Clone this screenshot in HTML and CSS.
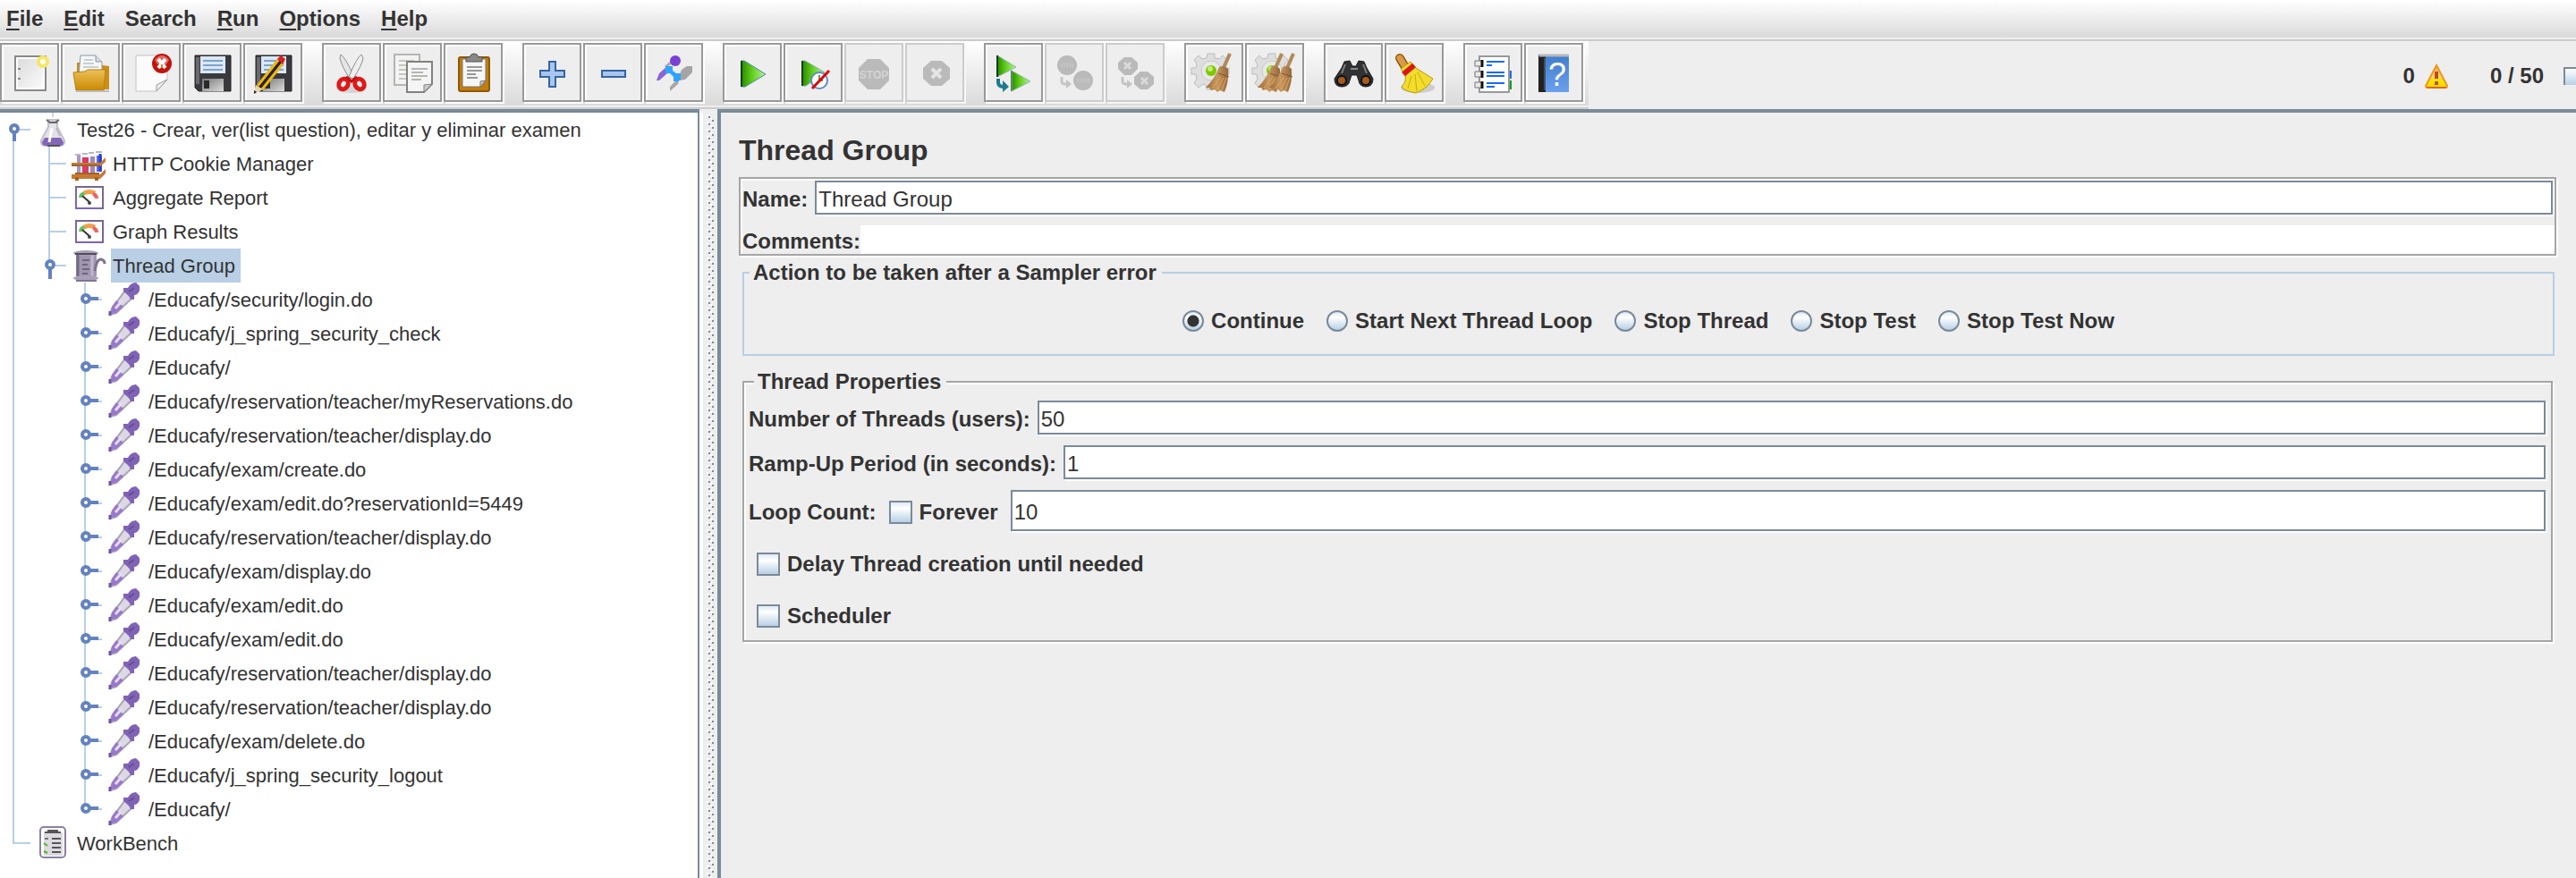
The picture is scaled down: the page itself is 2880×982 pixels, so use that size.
FILE: index.html
```html
<!DOCTYPE html>
<html lang="en">
<head>
<meta charset="utf-8">
<title>Thread Group</title>
<link rel="stylesheet" href="styles.css">
</head>
<body>
<svg class="defs" aria-hidden="true">
  <defs>
    <linearGradient id="gPage" x1="0" y1="0" x2="1" y2="1"><stop offset="0" stop-color="#dcdcdc"/><stop offset="1" stop-color="#fafafa"/></linearGradient>
    <linearGradient id="gFolder" x1="0" y1="0" x2="0" y2="1"><stop offset="0" stop-color="#edc05a"/><stop offset="1" stop-color="#c98a00"/></linearGradient>
    <linearGradient id="gGreen" x1="0" y1="0" x2="1" y2="0"><stop offset="0" stop-color="#2c8a00"/><stop offset=".45" stop-color="#62cf1c"/><stop offset="1" stop-color="#b8f0a0"/></linearGradient>
    <linearGradient id="gMetal" x1="0" y1="0" x2="1" y2="1"><stop offset="0" stop-color="#777"/><stop offset="1" stop-color="#ddd"/></linearGradient>
    <linearGradient id="gWarn" x1="0" y1="0" x2="0" y2="1"><stop offset="0" stop-color="#fbb03c"/><stop offset=".45" stop-color="#ffd08a"/><stop offset=".7" stop-color="#ffe400"/><stop offset="1" stop-color="#ffd800"/></linearGradient>
    <linearGradient id="gBook" x1="0" y1="0" x2="0" y2="1"><stop offset="0" stop-color="#3f7dcc"/><stop offset="1" stop-color="#6aa0ee"/></linearGradient>
    <linearGradient id="gStraw" x1="0" y1="0" x2="1" y2="0"><stop offset="0" stop-color="#9a6a35"/><stop offset=".5" stop-color="#c89860"/><stop offset="1" stop-color="#94683c"/></linearGradient>
  </defs>
  <symbol id="floppy" viewBox="2 2 62 62">
    <path d="M14 14H54V54H18L14 50Z" fill="#3a3a3e" stroke="#222" stroke-width="1"/>
    <path d="M15 16h4v30h-4z" fill="#6a6a6e"/>
    <rect x="20" y="15" width="28" height="19" fill="#dbe8f5"/>
    <path d="M23 20H45M23 25H45M23 30H45" stroke="#7fa3cc" stroke-width="2"/>
    <rect x="22" y="40" width="24" height="14" fill="url(#gMetal)"/>
    <rect x="24" y="42" width="6" height="9" fill="#2a2a2a"/>
  </symbol>
  <symbol id="gear" viewBox="2 2 62 62">
    <path d="M26 12h8v5l5 1 4-4 5 5-4 5 1 4h5v7h-5l-2 5 3 5-5 5-4-4-4 2v4h-8v-4l-4-2-5 4-5-5 3-5-1-5h-5v-7h5l1-4-3-5 5-5 4 4 5-1z" fill="#dedede" stroke="#bbb" stroke-width="1"/>
    <circle cx="30" cy="31" r="11" fill="#e8e8e8" stroke="#c8c8c8" stroke-width="1"/>
    <circle cx="30" cy="31" r="6" fill="#7cc800"/><circle cx="29" cy="29" r="3" fill="#c2ee70"/>
  </symbol>
  <symbol id="besom" viewBox="2 2 62 62">
    <path d="M51 12 44 28" stroke="#b08a58" stroke-width="4"/>
    <path d="M39 27Q44 24 49 29Q50 44 45 55L40 53 37 55 34 52 30 53 28 50 24 50Q34 40 39 27Z" fill="url(#gStraw)"/>
    <path d="M38 34 50 38" stroke="#7d552b" stroke-width="1"/>
    <path d="M41 38 31 51M44 39 37 52M47 39 42 53" stroke="#e0a95e" stroke-width="1"/>
  </symbol>
  <symbol id="guide" viewBox="0 0 40 38"><path d="M15 0V38" class="line"/></symbol>
  <symbol id="branch" viewBox="0 0 40 38"><path d="M15 0V38M16 19H34" class="line"/></symbol>
  <symbol id="end" viewBox="0 0 40 38"><path d="M15 0V19H34" class="line"/></symbol>
  <symbol id="root" viewBox="0 0 40 38"><path d="M15 20V38M22 19H34" class="line"/><circle cx="16" cy="18" r="4" class="knob"/><path d="M16 23V32" class="knob"/></symbol>
  <symbol id="open" viewBox="0 0 40 38"><path d="M15 0V14M22 19H34" class="line"/><circle cx="16" cy="18" r="4" class="knob"/><path d="M16 23V34" class="knob"/></symbol>
  <symbol id="closed" viewBox="0 0 40 38"><path d="M15 0V38M29 19H34" class="line"/><circle cx="16" cy="18" r="4" class="knob"/><path d="M21 18H30" class="knob"/></symbol>
  <symbol id="closed-last" viewBox="0 0 40 38"><path d="M15 0V14M29 19H34" class="line"/><circle cx="16" cy="18" r="4" class="knob"/><path d="M21 18H30" class="knob"/></symbol>
  <symbol id="flask" viewBox="0 0 44 38">
    <path d="M14 8H24V16L32 31Q33 36 28 37H10Q5 36 6 31L14 16Z" fill="#e4e2e8" stroke="#c4c0ca" stroke-width="2"/>
    <path d="M10 28H28L31 33Q31 37 27 37H11Q7 37 7 33Z" fill="#8468b8"/>
    <path d="M13 37H27" stroke="#555" stroke-width="2"/><path d="M12 8 16 11M26 8 22 11M15 11H24" stroke="#666" stroke-width="2"/>
    <path d="M18 17 15 33" stroke="#fff" stroke-width="3"/><path d="M23 17 27 26" stroke="#bdb8c4" stroke-width="2"/>
    <path d="M19 0V5" stroke="#d8d6dc" stroke-width="2"/>
  </symbol>
  <symbol id="rack" viewBox="0 0 44 38">
    <path d="M6 10H10V30H6Z" fill="#a698c4"/><path d="M12 12H19V30H12Z" fill="#d93a68"/><path d="M21 11H26V30H21Z" fill="#9d87c6"/><path d="M28 10H34V28H28Z" fill="#5a6cdc"/>
    <path d="M32 8V28" stroke="#2a3fd0" stroke-width="3"/>
    <path d="M4 9h6M12 8h6M19 7h6M27 6h7" stroke="#b9b6c0" stroke-width="2"/>
    <path d="M11 9V28M20 9V28M27 8V28" stroke="#f3f1f7" stroke-width="2"/>
    <path d="M0 18H32L38 12V17L32 22H0Z" fill="#c67a32"/><path d="M0 31H32L38 25V30L32 36H0Z" fill="#c67a32"/>
    <path d="M6 34V38M28 34V38" stroke="#a95f20" stroke-width="4"/>
    <path d="M0 21H32M4 30H31" stroke="#a0622a" stroke-width="2"/>
  </symbol>
  <symbol id="gauge" viewBox="0 0 44 38">
    <rect x="5" y="7" width="30" height="24" fill="#fff" stroke="#8064b0" stroke-width="2"/>
    <path d="M4 7H36M35 6V32" stroke="#77688f" stroke-width="2"/>
    <path d="M10 19Q10 15 15 14" stroke="#5fc35c" stroke-width="4" fill="none"/><path d="M14 14Q20 11 26 14" stroke="#f0a04c" stroke-width="5" fill="none"/><path d="M24 15Q28 16 28 20" stroke="#f06060" stroke-width="4" fill="none"/>
    <path d="M12 17 20 24" stroke="#333" stroke-width="2"/><circle cx="20" cy="25" r="2" fill="#444"/>
  </symbol>
  <symbol id="spool" viewBox="0 0 44 38">
    <path d="M5 5H28V31H5Z" fill="#a196b0"/><path d="M7 7V31" stroke="#736a80" stroke-width="3"/><path d="M23 7V31" stroke="#c0b8cc" stroke-width="3"/>
    <ellipse cx="16" cy="5" rx="14" ry="3" fill="#a99fb8"/><path d="M4 6H28" stroke="#514c5a" stroke-width="2"/>
    <ellipse cx="16" cy="33" rx="14" ry="3" fill="#a99fb8"/><path d="M5 36H28" stroke="#7f7590" stroke-width="2"/>
    <path d="M12 13H20M12 18H18M12 23H20M12 28H18" stroke="#6f667c" stroke-width="2"/>
    <path d="M26 25C28 14 30 12 33 12Q37 13 37 17" stroke="#80738f" stroke-width="3" fill="none"/>
  </symbol>
  <symbol id="pipette" viewBox="0 0 44 38">
    <path d="M20 9 29 16 10 34 3 36 5 29Z" fill="#dcd8e4" stroke="#aaa5b4" stroke-width="2"/>
    <path d="M10 20 18 27 10 34 4 35 5 27Z" fill="#9878cc"/><path d="M16 21 9 29" stroke="#e6dcf6" stroke-width="3"/>
    <path d="M3 32V37" stroke="#6f52a6" stroke-width="3"/>
    <path d="M18 6H23Q26 0 32 0L36 4V9Q34 14 30 14V19H26Q25 15 18 10Z" fill="#8062b6"/>
    <path d="M24 10 30 6" stroke="#62508a" stroke-width="2"/>
  </symbol>
  <symbol id="clip" viewBox="0 0 44 38">
    <rect x="5" y="1" width="28" height="34" rx="4" fill="#fff" stroke="#8c80a0" stroke-width="2"/>
    <rect x="9" y="7" width="21" height="26" fill="#dcd9e0"/>
    <path d="M10 7H28M13 5H25" stroke="#555" stroke-width="2"/><path d="M18 14H28M18 19H28M18 24H28M18 29H28" stroke="#555" stroke-width="2"/>
    <path d="M10 14H14" stroke="#777" stroke-width="2"/><path d="M9 19 13 22M9 28 13 30" stroke="#4bb51f" stroke-width="2"/>
  </symbol>
</svg>

<nav class="menubar">
  <button class="menu"><u>F</u>ile</button>
  <button class="menu"><u>E</u>dit</button>
  <button class="menu">Search</button>
  <button class="menu"><u>R</u>un</button>
  <button class="menu"><u>O</u>ptions</button>
  <button class="menu"><u>H</u>elp</button>
</nav>

<header class="top">
  <div class="toolbar">
    <div class="group">
      <button class="tool" aria-label="New"><svg viewBox="2 2 62 62"><rect x="17" y="15" width="34" height="38" fill="#fff" stroke="#888a85" stroke-width="2"/><rect x="20" y="18" width="28" height="32" fill="url(#gPage)"/><path d="M20 29h3M20 40h3" stroke="#888" stroke-width="2"/><circle cx="48" cy="21" r="5" fill="#fff" stroke="#f5e766" stroke-width="4"/></svg></button>
      <button class="tool" aria-label="Open"><svg viewBox="2 2 62 62"><path d="M18 22H27L54 26V52H18Z" fill="#c98f1a"/><path d="M22 14H39L46 21V36H20Z" fill="#f4f6f8" stroke="#8c98a4" stroke-width="1"/><path d="M39 14V21H46" fill="#cfdbe6" stroke="#8c98a4"/><path d="M26 19h10M25 23h12M25 27h17" stroke="#9aa" stroke-width="1"/><path d="M14 33 27 32 30 30H50L48 53H17Z" fill="url(#gFolder)" stroke="#b87f0a" stroke-width="1"/><path d="M17 54H54" stroke="#bbb" stroke-width="2"/></svg></button>
      <button class="tool" aria-label="Close"><svg viewBox="2 2 62 62"><path d="M16 14H51V41L39 54H16Z" fill="#fbfbfb" stroke="#c2c2c2" stroke-width="1"/><path d="M39 54V47L51 41Z" fill="#eee" stroke="#999" stroke-width="1"/><circle cx="45" cy="23" r="11" fill="#c4120c"/><path d="M37 19Q45 9 53 19L50 24H40Z" fill="#de6a62"/><path d="M41 18 49 28M49 18 41 28" stroke="#fff" stroke-width="4"/><path d="M45 24v4" stroke="#e87a1c" stroke-width="2"/></svg></button>
      <button class="tool" aria-label="Save"><svg viewBox="2 2 62 62"><use href="#floppy" x="2" y="2" width="62" height="62"/></svg></button>
      <button class="tool" aria-label="Save as"><svg viewBox="2 2 62 62"><use href="#floppy" x="2" y="2" width="62" height="62"/><path d="M42 20 18 50" stroke="#2a2200" stroke-width="8"/><path d="M40 18 16 48M44 23 21 52" stroke="#edb918" stroke-width="3"/><path d="M38 18 42 14 47 18 44 24Z" fill="#d81e28"/><path d="M14 47 22 52 12 57Z" fill="#e8d2a8"/><path d="M12 57v-4l3 2z" fill="#222"/></svg></button>
    </div>
    <div class="group">
      <button class="tool" aria-label="Cut"><svg viewBox="2 2 62 62"><ellipse cx="33" cy="52" rx="16" ry="4" fill="#d5d5d5"/><path d="M21 13Q26 16 36 38L31 40Q22 26 20 17Z" fill="#e6e6e6" stroke="#8d8f8b" stroke-width="1"/><path d="M44 13Q39 16 30 38L35 40Q45 24 46 17Z" fill="#eee" stroke="#8d8f8b" stroke-width="1"/><ellipse cx="24" cy="46" rx="5" ry="6" fill="none" stroke="#e01818" stroke-width="5" transform="rotate(30 24 46)"/><ellipse cx="42" cy="46" rx="5" ry="6" fill="none" stroke="#e01818" stroke-width="5" transform="rotate(-30 42 46)"/><path d="M27 38 33 43 39 38" stroke="#c81010" stroke-width="3" fill="none"/></svg></button>
      <button class="tool" aria-label="Copy"><svg viewBox="2 2 62 62"><path d="M13 13H41V47H13Z" fill="#f3f3f3" stroke="#b4b6b0" stroke-width="2"/><path d="M18 20h17M18 25h8M18 30h8M18 35h8M18 40h8" stroke="#c4c6c0" stroke-width="2"/><path d="M27 21H55V46L46 55H27Z" fill="#f5f5f5" stroke="#80827c" stroke-width="2"/><path d="M46 55V47L55 46Z" fill="#ccc" stroke="#80827c" stroke-width="1"/><path d="M32 29h18M32 33h13M32 37h18M32 41h11" stroke="#b4b6b0" stroke-width="2"/></svg></button>
      <button class="tool" aria-label="Paste"><svg viewBox="2 2 62 62"><rect x="17" y="16" width="34" height="38" rx="2" fill="#c17d11" stroke="#8f5902" stroke-width="2"/><path d="M21 18H47V42L41 49H21Z" fill="#f6f6f6" stroke="#777" stroke-width="1"/><path d="M41 49V43L47 42Z" fill="#ccc" stroke="#777"/><path d="M26 27h17M26 31h17M26 35h10M26 39h12" stroke="#999" stroke-width="2"/><path d="M25 21V16H29Q30 12 34 12Q38 12 39 16H43V21Z" fill="#888a85" stroke="#555" stroke-width="1"/></svg></button>
    </div>
    <div class="group">
      <button class="tool" aria-label="Expand all"><svg viewBox="2 2 62 62"><path d="M30 21H37V31H47V38H37V49H30V38H20V31H30Z" fill="#aac6ec" stroke="#3465a4" stroke-width="2"/></svg></button>
      <button class="tool" aria-label="Collapse all"><svg viewBox="2 2 62 62"><rect x="21" y="31" width="26" height="7" fill="#aac6ec" stroke="#3465a4" stroke-width="2"/></svg></button>
      <button class="tool" aria-label="Toggle"><svg viewBox="2 2 62 62"><path d="M48 26H54V33L46 41 39 42 38 46 29 54V49L38 40 42 30Z" fill="#a5a5a5"/><path d="M26 26 17 34 14 42 17 42 26 34Z" fill="#8c62d8"/><path d="M24 27 35 18" stroke="#aaa" stroke-width="3"/><path d="M24 26H32V31L36 34H41V41L38 43H33V38L29 34H24Z" fill="#2ea4ff"/><circle cx="35" cy="20" r="6" fill="#7a3fd4"/></svg></button>
    </div>
    <div class="group">
      <button class="tool" aria-label="Start"><svg viewBox="2 2 62 62"><path d="M21 20H24L48 35 25 49H21Z" fill="url(#gGreen)" stroke="#4a8aa0" stroke-width="1"/><path d="M21 20V49" stroke="#12420a" stroke-width="2"/></svg></button>
      <button class="tool" aria-label="Start no pauses"><svg viewBox="2 2 62 62"><path d="M21 20H24L46 33 25 48H21Z" fill="url(#gGreen)" stroke="#7ab0a0" stroke-width="1"/><path d="M21 20V48" stroke="#12420a" stroke-width="2"/><circle cx="40" cy="42" r="9" fill="#fff" stroke="#5e8cc4" stroke-width="2"/><path d="M40 36V42H44" stroke="#5a9a60" stroke-width="2" fill="none"/><path d="M51 31 32 51" stroke="#e00000" stroke-width="3"/></svg></button>
      <button class="tool" aria-label="Stop" disabled><svg viewBox="2 2 62 62"><path d="M26 18H40L50 28V42L40 52H26L16 42V28Z" fill="#bababa"/><text x="33" y="40" font-size="12" fill="#d4d4d4" text-anchor="middle">STOP</text></svg></button>
      <button class="tool" aria-label="Shutdown" disabled><svg viewBox="2 2 62 62"><path d="M29 20H41L50 28V40L41 48H29L20 40V28Z" fill="#bababa"/><path d="M30 29 40 39M40 29 30 39" stroke="#e4e4e4" stroke-width="4"/></svg></button>
    </div>
    <div class="group">
      <button class="tool" aria-label="Remote start all"><svg viewBox="2 2 62 62"><path d="M15 14 36 27 15 38Z" fill="url(#gGreen)" stroke="#8fb8b0" stroke-width="1"/><path d="M15 14V38M31 31V54" stroke="#123c14" stroke-width="2"/><path d="M31 31 52 43 31 54Z" fill="url(#gGreen)" stroke="#8fb8b0" stroke-width="1"/><path d="M16 40V44Q16 49 22 49" fill="none" stroke="#1d7a90" stroke-width="4"/><path d="M21 42 28 49 21 55Z" fill="#1d7a90"/></svg></button>
      <button class="tool" aria-label="Remote stop all" disabled><svg viewBox="2 2 62 62"><circle cx="25" cy="25" r="11" fill="#bababa"/><circle cx="43" cy="42" r="11" fill="#bababa"/><path d="M18 25H32M36 42H50" stroke="#c4c4c4" stroke-width="5" stroke-dasharray="2 1"/><path d="M19 38V43Q19 46 24 46" fill="none" stroke="#c4c4c4" stroke-width="3"/><path d="M24 41 30 46 24 51Z" fill="#c4c4c4"/></svg></button>
      <button class="tool" aria-label="Remote shutdown all" disabled><svg viewBox="2 2 62 62"><path d="M21 16H29L36 22V29L29 36H21L14 29V22Z" fill="#bababa"/><path d="M39 32H47L54 38V46L47 52H39L32 46V38Z" fill="#bababa"/><path d="M21 22 28 29M28 22 21 29M40 39 47 46M47 39 40 46" stroke="#dadada" stroke-width="3"/><path d="M19 38V43Q19 46 24 46" fill="none" stroke="#c4c4c4" stroke-width="3"/><path d="M24 41 30 46 24 51Z" fill="#c4c4c4"/></svg></button>
    </div>
    <div class="group">
      <button class="tool" aria-label="Clear"><svg viewBox="2 2 62 62"><use href="#gear" x="2" y="2" width="62" height="62"/><use href="#besom" x="2" y="2" width="62" height="62"/></svg></button>
      <button class="tool" aria-label="Clear all"><svg viewBox="2 2 62 62"><use href="#gear" x="2" y="2" width="62" height="62"/><use href="#besom" x="-8" y="2" width="62" height="62"/><use href="#besom" x="5" y="2" width="62" height="62"/></svg></button>
    </div>
    <div class="group">
      <button class="tool" aria-label="Search"><svg viewBox="2 2 62 62"><path d="M23 21 29 20 32 26H36L39 20 45 21 48 28 55 40Q55 49 47 49Q40 49 39 42L37 36H31L29 42Q28 49 20 49Q12 49 12 40L20 28Z" fill="#303234" stroke="#1a1a1a" stroke-width="1"/><path d="M24 24 20 34M44 24 48 34" stroke="#7d8082" stroke-width="2"/><circle cx="20" cy="42" r="5" fill="#a85a1c" stroke="#111" stroke-width="2"/><circle cx="47" cy="42" r="5" fill="#a85a1c" stroke="#111" stroke-width="2"/><path d="M30 29H38" stroke="#888" stroke-width="2"/></svg></button>
      <button class="tool" aria-label="Reset search"><svg viewBox="2 2 62 62"><ellipse cx="37" cy="50" rx="19" ry="6" fill="#cdcdcd"/><path d="M17 17 23 27" stroke="#8f5902" stroke-width="10" stroke-linecap="round"/><path d="M17 17 23 27" stroke="#d89a4a" stroke-width="7" stroke-linecap="round"/><path d="M18 29 29 21 35 28 54 40Q47 52 35 56Q22 54 19 49Q26 42 22 34Z" fill="#f2dc2c" stroke="#b89a00" stroke-width="1"/><path d="M21 35 33 25" stroke="#d81818" stroke-width="6"/><path d="M30 37 26 51M34 35 36 54M37 33 45 48" stroke="#c8aa10" stroke-width="1"/></svg></button>
    </div>
    <div class="group">
      <button class="tool" aria-label="Function helper"><svg viewBox="2 2 62 62"><path d="M49 31h5v9h-5z" fill="#1c6cf0"/><path d="M49 42h5v10h-5z" fill="#0c9c18"/><rect x="18" y="15" width="33" height="40" fill="#fff" stroke="#999" stroke-width="2"/><path d="M26 21H46M26 33H46M26 37H46M26 45H46" stroke="#1a6af0" stroke-width="2"/><path d="M26 25H32M26 49H35" stroke="#1a6af0" stroke-width="2"/><path d="M13 20h8v6h-8zM13 32h8v6h-8zM13 44h8v6h-8z" fill="#e8e8e8" stroke="#777" stroke-width="1"/><path d="M21 19v8M21 31v8M21 43v8" stroke="#111" stroke-width="3"/></svg></button>
      <button class="tool" aria-label="Help"><svg viewBox="2 2 62 62"><rect x="16" y="13" width="34" height="42" fill="url(#gBook)"/><path d="M16 15h8v40h-8z" fill="#222"/><path d="M17 14H50" stroke="#b4b8bc" stroke-width="3"/><path d="M23 17V53" stroke="#5c7ea8" stroke-width="1"/><text x="37" y="48" font-size="36" font-weight="400" fill="#fff" text-anchor="middle">?</text></svg></button>
    </div>
  </div>
  <div class="status">
    <span class="warn">0 <svg class="warn-icon" viewBox="0 0 28 28"><path d="M14 2 26 25Q26 27 24 27H4Q2 27 2 25Z" fill="url(#gWarn)" stroke="#f0961c" stroke-width="2"/><path d="M3 27H25" stroke="#e06a10" stroke-width="2"/><path d="M14 9V17M14 20V24" stroke="#c04e10" stroke-width="4"/></svg></span>
    <span class="count">0 / 50</span>
    <span class="lamp"></span>
  </div>
</header>

<main class="split">
  <nav class="pane tree" id="tree"></nav>
  <div class="divider"></div>
  <section class="pane form">
    <h1>Thread Group</h1>
    <div class="etched ident">
      <div class="row name"><label for="name">Name:</label><input class="field" id="name" value="Thread Group"></div>
      <div class="row comments"><label for="comments">Comments:</label><input class="flat" id="comments"></div>
    </div>
    <fieldset class="box action">
      <legend>Action to be taken after a Sampler error</legend>
      <label class="option"><input type="radio" name="act" checked>Continue</label>
      <label class="option"><input type="radio" name="act">Start Next Thread Loop</label>
      <label class="option"><input type="radio" name="act">Stop Thread</label>
      <label class="option"><input type="radio" name="act">Stop Test</label>
      <label class="option"><input type="radio" name="act">Stop Test Now</label>
    </fieldset>
    <fieldset class="box etched props">
      <legend>Thread Properties</legend>
      <div class="row"><label for="threads">Number of Threads (users):</label><input class="field" id="threads" value="50"></div>
      <div class="row"><label for="ramp">Ramp-Up Period (in seconds):</label><input class="field" id="ramp" value="1"></div>
      <div class="row loop"><label for="loops">Loop Count:</label><label class="option"><input type="checkbox">Forever</label><input class="field" id="loops" value="10"></div>
      <label class="option single"><input type="checkbox">Delay Thread creation until needed</label>
      <label class="option single"><input type="checkbox">Scheduler</label>
    </fieldset>
  </section>
</main>
<script src="tree.js"></script>
</body>
</html>
```
FILE: tree.js
```js
const samplers = [
  "/Educafy/security/login.do",
  "/Educafy/j_spring_security_check",
  "/Educafy/",
  "/Educafy/reservation/teacher/myReservations.do",
  "/Educafy/reservation/teacher/display.do",
  "/Educafy/exam/create.do",
  "/Educafy/exam/edit.do?reservationId=5449",
  "/Educafy/reservation/teacher/display.do",
  "/Educafy/exam/display.do",
  "/Educafy/exam/edit.do",
  "/Educafy/exam/edit.do",
  "/Educafy/reservation/teacher/display.do",
  "/Educafy/reservation/teacher/display.do",
  "/Educafy/exam/delete.do",
  "/Educafy/j_spring_security_logout",
  "/Educafy/"
];

// Each row: guide cells from left to right, icon, label, selected.
const rows = [
  [["root"], "flask", "Test26 - Crear, ver(list question), editar y eliminar examen"],
  [["guide", "branch"], "rack", "HTTP Cookie Manager"],
  [["guide", "branch"], "gauge", "Aggregate Report"],
  [["guide", "branch"], "gauge", "Graph Results"],
  [["guide", "open"], "spool", "Thread Group", true],
  ...samplers.map((s, i) => [["guide", "", i < samplers.length - 1 ? "closed" : "closed-last"], "pipette", s]),
  [["end"], "clip", "WorkBench"]
];

const use = (id, cls) => `<svg class="${cls}" aria-hidden="true">${id ? `<use href="#${id}"/>` : ""}</svg>`;

document.getElementById("tree").innerHTML = "<ul>" + rows.map(([cells, icon, label, selected]) =>
  `<li>${cells.map(c => use(c, "cell")).join("")}${use(icon, "icon")}<span class="label${selected ? " selected" : ""}">${label}</span></li>`
).join("") + "</ul>";
```
FILE: styles.css
```css
* { box-sizing: border-box; }
body {
  margin: 0;
  height: 100vh;
  display: flex;
  flex-direction: column;
  overflow: hidden;
  background: #eee;
  color: #333;
  font: bold 24px/28px "Liberation Sans", Arial, sans-serif;
}
button, input { font: inherit; color: inherit; margin: 0; }
.defs { position: absolute; width: 0; height: 0; }
.line { stroke: #b8cfe5; stroke-width: 2; fill: none; }
.knob { stroke: #6382bf; stroke-width: 4; fill: #fff; }

.menubar {
  display: flex;
  gap: 23px;
  padding: 5px 7px 7px;
  border-bottom: 2px solid #ccc;
  background: linear-gradient(#fff, #dadada 42px, #eee 42px);
}
.menu { border: 0; padding: 0; background: none; height: 32px; line-height: 28px; }
.menu u { text-decoration-thickness: 2px; text-underline-offset: 3px; }

.top { display: flex; justify-content: space-between; height: 76px; }
.toolbar {
  display: flex;
  gap: 22px;
  padding: 2px 6px 6px 0;
  border-bottom: 2px solid #ccc;
  background: linear-gradient(#fff, #dadada 72px, #eee 72px);
}
.group { display: flex; gap: 2px; }
.tool {
  width: 66px;
  height: 66px;
  padding: 0;
  border: 2px solid #999;
  background: #eee;
  box-shadow: 2px 2px 0 #fff, inset 2px 2px 0 #fff;
}
.tool:disabled { border-color: #ccc; box-shadow: 2px 2px 0 #f6f6f6; }
.tool svg { display: block; width: 62px; height: 62px; }
.status { display: flex; align-items: center; gap: 22px; padding-top: 2px; }
.count { margin-left: 24px; }
.warn { display: flex; align-items: center; gap: 10px; }
.warn-icon { width: 28px; height: 28px; }
.lamp {
  width: 14px;
  height: 20px;
  border: solid #7a8a99;
  border-width: 2px 0 0 2px;
  background: linear-gradient(#fff, #b8cfe5);
}

.split { flex: 1; min-height: 0; display: flex; }
.pane { border-top: 4px solid #7a8a99; }
.tree {
  flex: 0 0 782px;
  border-right: 2px solid #7a8a99;
  background: #fff;
  box-shadow: 4px 4px 0 #fff;
  overflow: hidden;
  font-weight: normal;
  font-size: 22px;
}
.tree ul { list-style: none; margin: 0; padding: 0; }
.tree li { display: flex; align-items: center; height: 38px; }
.cell { width: 40px; height: 38px; flex: none; }
.icon { width: 44px; height: 38px; flex: none; }
.label { height: 38px; padding: 2px 6px 0 2px; line-height: 36px; white-space: nowrap; }
.selected { background: #b8cfe5; }
.divider {
  flex: 0 0 12px;
  margin: 6px 0 0 8px;
  padding-right: 4px;
  background:
    conic-gradient(from 270deg at 2px 2px, #fff 90deg, transparent 0) 0 0 / 8px 8px,
    conic-gradient(from 270deg at 2px 2px, #7a8a99 90deg, transparent 0) 2px 2px / 8px 8px,
    conic-gradient(from 270deg at 2px 2px, #fff 90deg, transparent 0) 4px 4px / 8px 8px,
    conic-gradient(from 270deg at 2px 2px, #7a8a99 90deg, transparent 0) 6px 6px / 8px 8px;
  background-clip: content-box;
}
.form { flex: 1; min-width: 0; border-left: 4px solid #7a8a99; padding: 22px 22px 0 20px; }

h1 { margin: 0 0 10px; font-size: 32px; line-height: 40px; }
.etched { border: 2px solid #a5a5a5; box-shadow: 2px 2px 0 #fff, inset 2px 2px 0 #fff; }
.row { display: flex; align-items: center; gap: 8px; }
.row label { padding-top: 4px; }
.ident { padding: 2px 0 0 2px; }
.name { padding-right: 2px; }
.comments { gap: 0; margin-top: 12px; }
.field, .flat { flex: 1; min-width: 0; height: 38px; padding: 4px 2px 0; font-weight: normal; background: #fff; }
.field { border: 2px solid #7a8a99; box-shadow: 2px 2px 0 #fff; }
.flat { height: 32px; border: 0; }

.box { margin: 0 2px 0 4px; min-width: 0; }
.box legend { padding: 0 6px 0 4px; margin-left: 6px; background: #eee; }
.action {
  display: flex;
  justify-content: center;
  align-items: center;
  gap: 25px;
  margin-top: 5px;
  padding: 26px 0 23px;
  border: 2px solid #b8cfe5;
}
.option { display: flex; align-items: center; gap: 8px; }
.props { margin: 15px 4px 0 4px; padding: 7px 6px 8px 5px; }
.props .row { margin-bottom: 12px; }
.props .loop { gap: 14px; margin-bottom: 18px; }
.props .loop .field { height: 46px; }
.single { height: 38px; margin: 0 0 20px 9px; }
.single:last-child { margin-bottom: 0; }
input[type="radio"], input[type="checkbox"] {
  appearance: none;
  width: 26px;
  height: 26px;
  border: 2px solid #7a8a99;
  background: linear-gradient(#dfe9f4, #fff 30%, #b8cfe5);
}
input[type="radio"] { width: 24px; height: 24px; border-radius: 50%; }
input[type="radio"]:checked { background: radial-gradient(circle, #333 6px, transparent 7px), linear-gradient(#dfe9f4, #fff 30%, #b8cfe5); }
```
